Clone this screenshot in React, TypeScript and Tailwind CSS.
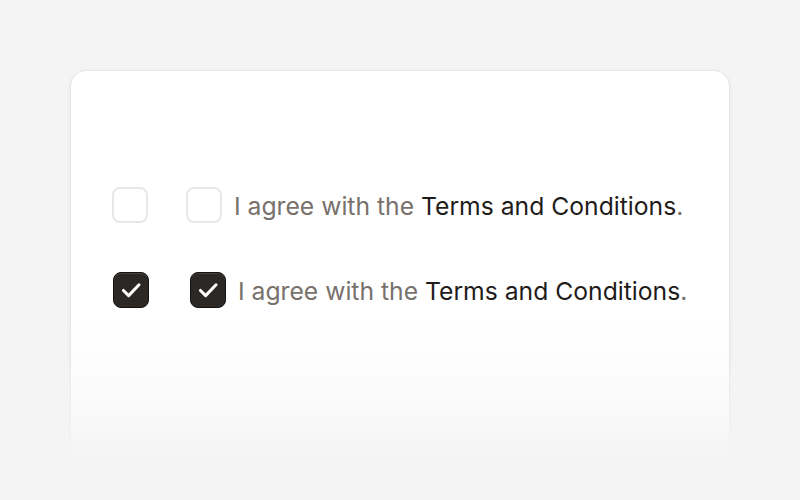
import React from 'react';

const Check = () => (
  <svg viewBox="0 0 36 36" className="w-full h-full" fill="none">
    <path d="M10 18.5 L15.5 24 L26.5 12.5" stroke="white" strokeWidth="3.2" strokeLinecap="round" strokeLinejoin="round" />
  </svg>
);

const Box: React.FC<{ checked?: boolean }> = ({ checked }) =>
  checked ? (
    <div className="w-9 h-9 shrink-0 rounded-[8px] bg-[#2c2825] border border-[#141210] shadow-[inset_0_1px_0_rgba(255,255,255,0.12)]">
      <Check />
    </div>
  ) : (
    <div className="w-9 h-9 shrink-0 rounded-[8px] bg-white border-2 border-[#e9e7e6]" />
  );

const Label = () => (
  <span className="text-[24.7px] leading-none text-[#78716c] pt-[2px]">
    I agree with the <span className="text-[#1f1c1a]">Terms and Conditions</span>.
  </span>
);

export default function App() {
  return (
    <div
      className="w-[800px] h-[500px] bg-[#f4f4f4] relative overflow-hidden"
      style={{ fontFamily: 'Inter, "Noto Sans", sans-serif' }}
    >
      <div className="mx-[70px] mt-[70px] h-[470px] rounded-2xl bg-white border border-[#e6e6e6] shadow-[0_1px_4px_rgba(0,0,0,0.05)] pt-[116px] pl-[41px] flex flex-col gap-[49px]">
        {/* unchecked row */}
        <div className="flex items-center">
          <Box />
          <div className="w-[38px]" />
          <Box />
          <div className="w-[12px]" />
          <Label />
        </div>
        {/* checked row */}
        <div className="flex items-center pl-px">
          <Box checked />
          <div className="w-[41px]" />
          <Box checked />
          <div className="w-[12px]" />
          <Label />
        </div>
      </div>

      {/* bottom fade */}
      <div className="absolute inset-x-0 bottom-0 h-[180px] bg-linear-to-b from-[#f4f4f4]/0 from-0% via-[#f4f4f4]/40 via-45% to-[#f4f4f4] to-78% pointer-events-none" />
    </div>
  );
}
